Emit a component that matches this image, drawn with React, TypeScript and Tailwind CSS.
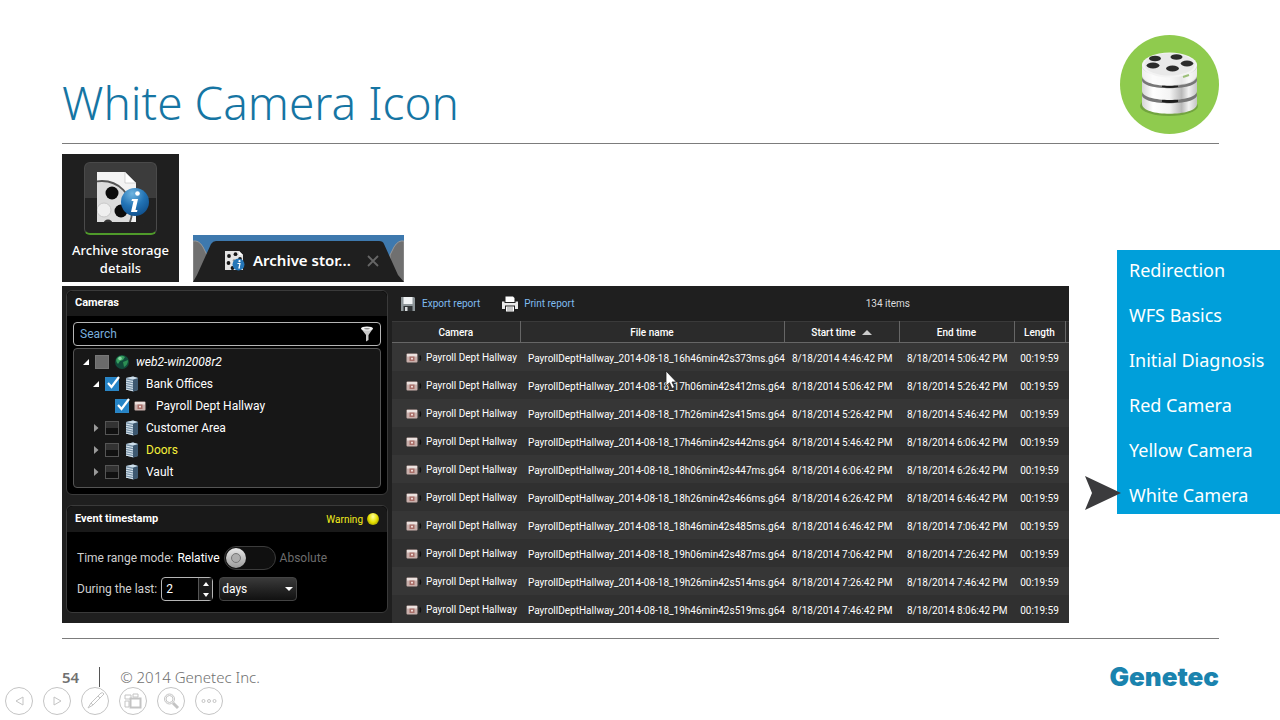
import React, { useState } from 'react';

const files = [
  { file: '16h46min42s373ms', start: '4:46:42', end: '5:06:42' },
  { file: '17h06min42s412ms', start: '5:06:42', end: '5:26:42' },
  { file: '17h26min42s415ms', start: '5:26:42', end: '5:46:42' },
  { file: '17h46min42s442ms', start: '5:46:42', end: '6:06:42' },
  { file: '18h06min42s447ms', start: '6:06:42', end: '6:26:42' },
  { file: '18h26min42s466ms', start: '6:26:42', end: '6:46:42' },
  { file: '18h46min42s485ms', start: '6:46:42', end: '7:06:42' },
  { file: '19h06min42s487ms', start: '7:06:42', end: '7:26:42' },
  { file: '19h26min42s514ms', start: '7:26:42', end: '7:46:42' },
  { file: '19h46min42s519ms', start: '7:46:42', end: '8:06:42' }
];

const topics = [
  'Redirection',
  'WFS Basics',
  'Initial Diagnosis',
  'Red Camera',
  'Yellow Camera',
  'White Camera'
];

const ArchiverLogo = () => (
  <svg viewBox="0 0 99 99" className="size-[99px] shrink-0" aria-hidden="true">
    <defs>
      <linearGradient id="drum" x1="0" x2="1">
        <stop offset="0" stopColor="#d5d5d5" />
        <stop offset="0.2" stopColor="#ffffff" />
        <stop offset="0.5" stopColor="#f4f4f4" />
        <stop offset="0.72" stopColor="#b9b9b9" />
        <stop offset="0.85" stopColor="#f2f2f2" />
        <stop offset="1" stopColor="#c4c4c4" />
      </linearGradient>
    </defs>
    <circle cx="49.500" cy="49.500" r="49.500" fill="#8fcb4e" />
    <ellipse cx="49" cy="71" rx="29" ry="10" fill="#5f8a35" opacity="0.6" />
    <path d="M22 60 V69 C22 82 77 82 77 69 V60 Z" fill="url(#drum)" />
    <path d="M22 60 C22 71 77 71 77 60 L76 56 H23 Z" fill="#777" />
    <path d="M42 67 q8 2 16 0 v-3 h-16 z" fill="#1d1d1d" />
    <path d="M22 45 V56 C22 68 77 68 77 56 V45 Z" fill="url(#drum)" />
    <path d="M22 45 C22 56 77 56 77 45 L76 41 H23 Z" fill="#777" />
    <path d="M42 52 q8 2 16 0 v-3 h-16 z" fill="#1d1d1d" />
    <path d="M22 29 V41 C22 54 77 54 77 41 V29 Z" fill="url(#drum)" />
    <path d="M22 31 C22 45 77 45 77 31 V39 C77 54 22 54 22 39 Z" fill="#fafafa" opacity="0.7" />
    <ellipse cx="49.500" cy="30" rx="27.500" ry="12.500" fill="#f3f3f3" />
    <ellipse cx="49.500" cy="29.500" rx="25" ry="11" fill="#e9e9e9" />
    <g fill="#2b2b2b">
      <ellipse cx="35" cy="23.500" rx="6" ry="2.800" />
      <ellipse cx="56.500" cy="22" rx="6" ry="2.800" />
      <ellipse cx="33" cy="30.500" rx="6.500" ry="2.900" />
      <ellipse cx="67" cy="28.500" rx="6.300" ry="2.900" />
      <ellipse cx="52.500" cy="33.500" rx="6.500" ry="2.900" />
    </g>
    <path d="M63 42 L69 40" stroke="#9bbf78" strokeWidth="2" />
  </svg>
);

const StorageIcon = () => (
  <svg viewBox="0 0 52 52" className="ml-1 size-[52px]" aria-hidden="true">
    <defs>
      <radialGradient id="info" cx="0.4" cy="0.2" r="0.9">
        <stop offset="0" stopColor="#6fb4e0" />
        <stop offset="0.5" stopColor="#2273b5" />
        <stop offset="1" stopColor="#0d4a86" />
      </radialGradient>
      <clipPath id="sheet">
        <path d="M0 0 H28 L39 11 V50 H0 Z" />
      </clipPath>
    </defs>
    <g clipPath="url(#sheet)">
      <rect width="39" height="50" fill="#f3f3f3" />
      <circle cx="5" cy="39" r="30" fill="#dcdcdc" stroke="#555" strokeWidth="1.800" />
      <circle cx="7" cy="38" r="7" fill="#efefef" stroke="#c8c8c8" />
      <circle cx="15" cy="21" r="6.500" fill="#0c0c0c" />
      <circle cx="24" cy="39" r="6.500" fill="#0c0c0c" />
      <circle cx="11" cy="52" r="4.500" fill="#333" />
    </g>
    <path d="M28 0 V11 H39 Z" fill="#ffffff" stroke="#b9b9b9" strokeWidth="0.600" />
    <circle cx="38" cy="30" r="14" fill="url(#info)" />
    <circle cx="40.500" cy="21.500" r="2.300" fill="#fff" />
    <path d="M35 27 h6 l-2.500 11 h2 l-0.500 2 h-6 l2.500 -11 h-2 z" fill="#fff" />
  </svg>
);

const TabIcon = () => (
  <svg viewBox="0 0 20 20" className="relative ml-8 size-5" aria-hidden="true">
    <path d="M0 0 H14 L18 4 V19 H0 Z" fill="#e4e4e4" />
    <path d="M14 0 V4 H18 Z" fill="#fff" />
    <g fill="#161616">
      <circle cx="4" cy="5" r="1.900" />
      <circle cx="10.500" cy="3.200" r="1.900" />
      <circle cx="15" cy="8" r="1.900" />
      <circle cx="3.500" cy="12" r="1.900" />
      <circle cx="7.500" cy="17" r="1.900" />
    </g>
    <circle cx="9" cy="9.500" r="1.300" fill="#999" />
    <circle cx="13.500" cy="13.500" r="6" fill="#2476b8" />
    <circle cx="14.500" cy="10.200" r="1.100" fill="#fff" />
    <path d="M12.500 12.500 h2.500 l-1 4.500 h1" stroke="#fff" strokeWidth="1.200" fill="none" />
  </svg>
);

const CameraIcon = () => (
  <svg viewBox="0 0 16 12" className="h-3 w-4 shrink-0" aria-hidden="true">
    <rect x="0.500" y="1.500" width="11" height="9" rx="1" fill="#c9b0ac" />
    <rect x="1" y="2" width="10" height="2.500" fill="#ece2df" />
    <rect x="3.500" y="4.500" width="5" height="4.500" fill="#a86e68" />
    <rect x="5" y="5.800" width="2" height="1.700" fill="#f0dcd9" />
    <path d="M14 3.500 q1 2 0 5" stroke="#101010" strokeWidth="1.500" fill="none" />
  </svg>
);

const ServerIcon = () => (
  <svg viewBox="0 0 14 16" className="h-4 w-3.5 shrink-0" aria-hidden="true">
    <path d="M1 2 L8 0.500 L13 2 V14 L8 15.500 L1 13.500 Z" fill="#7993a8" />
    <path d="M8 3.500 L13 2 V14 L8 15.500 Z" fill="#3d5870" />
    <path d="M1 2 L8 0.500 L13 2 L8 3.500 Z" fill="#cfe0ec" />
    <path
      d="M1 4 L8 5.500 M1 6.300 L8 7.800 M1 8.600 L8 10.100 M1 10.900 L8 12.400 M1 13.200 L8 14.700"
      stroke="#dce8f1"
      strokeWidth="1"
    />
  </svg>
);

const GlobeIcon = () => (
  <svg viewBox="0 0 16 16" className="size-4 shrink-0" aria-hidden="true">
    <circle cx="8" cy="8" r="7" fill="#114a3a" />
    <path d="M3 4 Q7 0 11 3 L9 6 L6 7 L4 10 Q1 7 3 4 Z" fill="#36a05f" />
    <path d="M9 8 L14 6 Q14 11 10 13 Z" fill="#2c8f53" />
    <circle cx="6" cy="4.500" r="1.800" fill="#9fe0b4" opacity="0.8" />
  </svg>
);

const Expander = ({ open }: { open: boolean }) => (
  <svg viewBox="0 0 8 8" className="size-2 shrink-0" aria-hidden="true">
    {open ? <path d="M7 1 V7 H1 Z" fill="#fff" /> : <path d="M2 0 L6.500 4 L2 8 Z" fill="#9a9a9a" />}
  </svg>
);

interface NodeProps {
  id: string;
  label: string;
  indent: string;
  kind: 'globe' | 'server' | 'camera';
  open?: boolean;
  checked?: boolean;
  partial?: boolean;
  tone?: string;
}

const TreeNode = ({ id, label, indent, kind, open, checked, partial, tone = 'text-white' }: NodeProps) => {
  const [on, setOn] = useState(!!checked);
  return (
    <li className={`flex h-[22px] items-center ${indent}`}>
      {open === undefined ? <span className="w-2" /> : <Expander open={open} />}
      <span className="relative ml-[5px] flex size-[14px] shrink-0">
        <input
          id={id}
          type="checkbox"
          checked={on}
          onChange={() => setOn(!on)}
          className={`size-[14px] appearance-none border ${
            on
              ? 'border-[#2b86c5] bg-[#2583c6]'
              : partial
                ? 'border-[#777] bg-[#6b6b6b]'
                : 'border-[#555] bg-linear-to-b from-[#333] from-50% to-[#111] to-50%'
          }`}
        />
        {on && (
          <svg viewBox="0 0 16 16" className="pointer-events-none absolute -top-0.5 left-0 size-4">
            <path d="M3 8 L6.500 12 L14 2" fill="none" stroke="#fff" strokeWidth="2.200" />
          </svg>
        )}
      </span>
      <span className="ml-[5px] flex w-4 justify-center">
        {kind === 'globe' && <GlobeIcon />}
        {kind === 'server' && <ServerIcon />}
        {kind === 'camera' && <CameraIcon />}
      </span>
      <label htmlFor={id} className={`ml-1.5 ${tone}`}>
        {label}
      </label>
    </li>
  );
};

const CamerasPanel = () => (
  <section className="rounded-md border border-[#3a3a3a] bg-black pb-1.5">
    <h2 className="flex h-[25px] items-center rounded-t-md bg-[#191919] px-2 text-[11px] font-bold">
      Cameras
    </h2>
    <div className="px-1.5 pt-1.5">
      <div className="flex h-6 items-center rounded-sm border border-[#b5b5b5] px-1.5">
        <input
          aria-label="Search"
          placeholder="Search"
          className="min-w-0 flex-1 bg-transparent text-xs outline-none placeholder:text-[#78aedd]"
        />
        <svg viewBox="0 0 14 16" className="h-4 w-3.5" aria-hidden="true">
          <path d="M1 2.500 L6 9 V15.500 L8.500 14 V9 L13 2.500 Z" fill="#c9c9c9" />
          <ellipse cx="7" cy="2.500" rx="6" ry="2" fill="#f3f3f3" />
          <ellipse cx="7" cy="2.700" rx="3" ry="0.800" fill="#8a8a8a" />
        </svg>
      </div>
      <ul className="mt-0.5 rounded-sm border border-[#555] bg-[#171717] pt-0.5 pb-1 text-xs">
        <TreeNode id="root-node" label="web2-win2008r2" indent="pl-2" kind="globe" open partial tone="italic text-white" />
        <TreeNode id="bank" label="Bank Offices" indent="pl-[18px]" kind="server" open checked />
        <TreeNode id="payroll" label="Payroll Dept Hallway" indent="pl-7" kind="camera" checked />
        <TreeNode id="customer" label="Customer Area" indent="pl-[18px]" kind="server" open={false} />
        <TreeNode id="doors" label="Doors" indent="pl-[18px]" kind="server" open={false} tone="text-[#f5f03a]" />
        <TreeNode id="vault" label="Vault" indent="pl-[18px]" kind="server" open={false} />
      </ul>
    </div>
  </section>
);

const TimestampPanel = () => {
  const [days, setDays] = useState(2);
  return (
    <section className="rounded-md border border-[#3a3a3a] bg-black pb-[11px]">
      <div className="flex h-[26px] items-center rounded-t-md bg-[#191919] px-2">
        <h2 className="text-[11px] font-bold">Event timestamp</h2>
        <span className="ml-auto text-[10px] text-[#f3ee1c]">Warning</span>
        <span className="ml-1 size-3 rounded-full bg-radial-[at_50%_30%] from-[#ffffa0] via-[#e6e000] to-[#6b6800]" />
      </div>
      <div className="mt-3.5 flex h-6 items-center pl-2.5 text-xs">
        <label htmlFor="mode" className="text-[#cfcfcf]">
          Time range mode:
        </label>
        <span className="ml-1">Relative</span>
        <span className="relative ml-1 flex">
          <input
            id="mode"
            type="checkbox"
            role="switch"
            className="h-6 w-[52px] appearance-none rounded-full border border-[#3c3c3c] bg-[#101010]"
          />
          <span className="pointer-events-none absolute top-0.5 left-0.5 flex size-5 items-center justify-center rounded-full bg-linear-to-b from-[#e8e8e8] to-[#9c9c9c]">
            <span className="size-2.5 rounded-full border border-[#777] bg-[#adadad]" />
          </span>
        </span>
        <span className="ml-1 text-[#6d6d6d]">Absolute</span>
      </div>
      <div className="mt-[7px] flex h-6 items-center pl-2.5 text-xs">
        <label htmlFor="last" className="text-[#cfcfcf]">
          During the last:
        </label>
        <div className="ml-1 flex h-6 w-[52px] rounded-sm border border-[#b5b5b5]">
          <input
            id="last"
            value={days}
            onChange={(e) => setDays(Number(e.target.value) || 0)}
            className="w-0 min-w-0 flex-1 bg-transparent px-1 outline-none"
          />
          <span className="flex w-3.5 flex-col border-l border-[#555] bg-[#1c1c1c]">
            <button aria-label="More" onClick={() => setDays(days + 1)} className="flex flex-1 items-center justify-center">
              <svg viewBox="0 0 6 4" className="h-1 w-1.5">
                <path d="M0 4 L3 0 L6 4 Z" fill="#fff" />
              </svg>
            </button>
            <button aria-label="Fewer" onClick={() => setDays(days - 1)} className="flex flex-1 items-center justify-center">
              <svg viewBox="0 0 6 4" className="h-1 w-1.5">
                <path d="M0 0 L3 4 L6 0 Z" fill="#fff" />
              </svg>
            </button>
          </span>
        </div>
        <div className="relative ml-1.5">
          <select
            aria-label="Unit"
            className="h-6 w-[78px] appearance-none rounded-sm border border-[#444] bg-linear-to-b from-[#3a3a3a] to-[#111] pl-0.5">
            <option>days</option>
            <option>hours</option>
          </select>
          <svg viewBox="0 0 8 4" className="pointer-events-none absolute top-2.5 right-1 h-1 w-2">
            <path d="M0 0 L4 4 L8 0 Z" fill="#fff" />
          </svg>
        </div>
      </div>
    </section>
  );
};

const Report = () => (
  <div className="relative flex min-w-0 flex-1 flex-col">
    <div className="flex h-[35px] items-center pl-2 text-[10px] text-[#7fbcf0]">
      <button className="flex items-center gap-1.5">
        <svg viewBox="0 0 16 16" className="size-4" aria-hidden="true">
          <path d="M1 1 H14 L15 2 V15 H1 Z" fill="#8d9598" />
          <rect x="3.500" y="1" width="9" height="7" fill="#f1f4f5" />
          <rect x="3.500" y="10" width="9" height="5" fill="#303436" />
          <rect x="5" y="11" width="2.500" height="4" fill="#d9dcdd" />
        </svg>
        Export report
      </button>
      <button className="ml-[22px] flex items-center gap-1.5">
        <svg viewBox="0 0 16 16" className="size-4" aria-hidden="true">
          <path d="M3.500 0.500 H11 L12.500 2 V6 H3.500 Z" fill="#fff" />
          <path d="M0 5.500 H2.500 V7 H13.500 V5.500 H16 V13 H13 V9.500 H3 V13 H0 Z" fill="#e9e9e9" />
          <rect x="4" y="10.500" width="8" height="5" fill="#fff" />
          <path d="M5 12 H11 M5 14 H11" stroke="#777" strokeWidth="0.800" />
        </svg>
        Print report
      </button>
      <span className="ml-auto pr-[159px] text-[#dcdcdc]">134 items</span>
    </div>
    <table className="w-full table-fixed border-collapse text-[10px] whitespace-nowrap">
      <colgroup>
        <col className="w-[128px]" />
        <col />
        <col className="w-[115px]" />
        <col className="w-[115px]" />
        <col className="w-[51px]" />
        <col className="w-1" />
      </colgroup>
      <thead>
        <tr className="h-[21px] border-t border-b border-t-[#3a3a3a] border-b-[#666] bg-[#2b2b2b]">
          <th className="border-r border-[#666] p-0 font-medium">Camera</th>
          <th className="border-r border-[#666] p-0 font-medium">File name</th>
          <th className="border-r border-[#666] p-0 font-medium">
            Start time
            <svg viewBox="0 0 10 5" className="ml-1.5 inline h-[5px] w-2.5" aria-hidden="true">
              <path d="M0 5 L5 0 L10 5 Z" fill="#ccc" />
            </svg>
          </th>
          <th className="border-r border-[#666] p-0 font-medium">End time</th>
          <th className="border-r border-[#666] p-0 font-medium">Length</th>
          <td className="p-0" />
        </tr>
      </thead>
      <tbody>
        {files.map((row) => (
          <tr key={row.file} className="h-7 odd:bg-[#363636] even:bg-[#303030]">
            <td className="p-0 pt-0.5 pl-3.5">
              <div className="flex items-center gap-1">
                <CameraIcon />
                Payroll Dept Hallway
              </div>
            </td>
            <td className="p-0 pt-1 pl-2">PayrollDeptHallway_2014-08-18_{row.file}.g64</td>
            <td className="p-0 pt-1 pl-2">8/18/2014 {row.start} PM</td>
            <td className="p-0 pt-1 pl-2">8/18/2014 {row.end} PM</td>
            <td className="p-0 pt-1 text-center">00:19:59</td>
            <td className="p-0" />
          </tr>
        ))}
      </tbody>
    </table>
    <svg viewBox="0 0 12 20" className="absolute top-[84px] left-[273px] h-5 w-3" aria-hidden="true">
      <path
        d="M1 1 V16 L4.500 12.800 L7 18.500 L9.500 17.300 L7 12 H11.500 Z"
        fill="#fff"
        stroke="#222"
        strokeWidth="0.800"
      />
    </svg>
  </div>
);

const shapes = [
  { label: 'Previous', body: <path d="M18 10 V18 L11 14 Z" /> },
  { label: 'Next', body: <path d="M11 10 V18 L18 14 Z" /> },
  {
    label: 'Pen',
    body: <path d="M7 21 L10 16 L20 6 Q22 5 23 7 L12 18 Z M10 16 L12 18 M17 9 L19 11" />
  },
  {
    label: 'All slides',
    body: (
      <g>
        <path d="M6 8 H12 V12 H6 Z M14 7 H19 V10 H14 Z M6 14 H10 V20 H6 Z" />
        <rect x="11.500" y="11.500" width="10" height="9" strokeWidth="2" fill="#fff" />
      </g>
    )
  },
  {
    label: 'Zoom',
    body: (
      <g>
        <circle cx="12.500" cy="12" r="5" />
        <circle cx="12.500" cy="12" r="3.500" />
        <path d="M16 16 L21 21" strokeWidth="3" />
      </g>
    )
  },
  {
    label: 'More',
    body: (
      <g>
        <circle cx="8.500" cy="14" r="1.500" />
        <circle cx="14" cy="14" r="1.500" />
        <circle cx="19.500" cy="14" r="1.500" />
      </g>
    )
  }
];

const App = () => {
  return (
    <div className="flex min-h-screen flex-col bg-white font-['Noto_Sans',sans-serif]">
      <header className="mr-[61px] ml-[62px] flex items-end justify-between border-b border-[#7c7c7c] pt-[35px] pb-[9px]">
        <h1 className="pb-1 text-[46px] leading-[56px] font-light text-[#1675a3]">White Camera Icon</h1>
        <ArchiverLogo />
      </header>

      <main className="flex items-start pt-2.5 pl-[62px]">
        <div className="min-w-0 flex-1">
          <div className="flex items-end gap-3.5">
            <button className="flex h-32 w-[117px] flex-col items-center bg-[#1f1f1f] pt-2 text-[13px] leading-[18px] font-medium text-white">
              <span className="mb-1.5 flex size-[73px] items-center justify-center rounded-md border border-b-2 border-[#4a4a4a] border-b-[#4f9a2a] bg-linear-to-b from-[#3c3c3c] from-50% to-[#222] to-50%">
                <StorageIcon />
              </span>
              Archive storage details
            </button>
            <div className="relative flex h-[47px] w-[211px] items-center pt-1 text-white">
              <svg viewBox="0 0 211 47" className="absolute inset-0 size-full" aria-hidden="true">
                <rect width="211" height="47" fill="#3e79ae" />
                <path d="M0 6 Q6 5 10 12 L14 20 V47 H0 Z" fill="#707070" stroke="#999" />
                <path d="M211 6 Q205 5 201 12 L197 20 V47 H211 Z" fill="#707070" stroke="#999" />
                <path d="M0 47 L4 40 L18 9 Q20 6 23 6 H186 Q190 6 191 9 L205 40 L211 47 Z" fill="#1f1f1f" />
              </svg>
              <TabIcon />
              <span className="relative ml-2 text-[15px] font-semibold">Archive stor...</span>
              <button aria-label="Close tab" className="relative mr-[25px] ml-auto">
                <svg viewBox="0 0 12 12" className="size-3">
                  <path d="M1 1 L11 11 M11 1 L1 11" stroke="#666" strokeWidth="1.800" />
                </svg>
              </button>
            </div>
          </div>

          <div className="mt-1 flex bg-[#1f1f1f] font-['Roboto',sans-serif] text-white">
            <div className="flex w-[330px] shrink-0 flex-col gap-2.5 p-1">
              <CamerasPanel />
              <TimestampPanel />
            </div>
            <Report />
          </div>
        </div>

        <nav className="relative mt-24 ml-12 w-[163px] shrink-0 bg-[#009fda]">
          <ul className="flex flex-col gap-1.5 text-lg text-white">
            {topics.map((topic) => (
              <li key={topic} className="flex h-[39px] items-center pl-3">
                <a href="#" className="whitespace-nowrap">
                  {topic}
                </a>
              </li>
            ))}
          </ul>
          <svg viewBox="0 0 36 34" className="absolute bottom-1 -left-8 h-[34px] w-9" aria-hidden="true">
            <path d="M0 0 L36 17 L0 34 L7 17 Z" fill="#3b3b3d" />
          </svg>
        </nav>
      </main>

      <footer className="mt-[15px]">
        <div className="mr-[61px] ml-[62px] flex items-center border-t border-[#7c7c7c] pt-7 text-[15px] leading-5 text-[#707070]">
          <span className="font-semibold">54</span>
          <span className="ml-5 h-5 w-px bg-[#555]" />
          <span className="ml-5 font-light">© 2014 Genetec Inc.</span>
          <span className="ml-auto font-['Inter',sans-serif] text-[26px] font-black text-[#1a83ae]">Genetec</span>
        </div>
        <div className="flex gap-2.5 pl-[5px]">
          {shapes.map((shape) => (
            <button key={shape.label} aria-label={shape.label}>
              <svg viewBox="0 0 28 28" className="size-7" fill="none" stroke="#c4c4c4">
                <circle cx="14" cy="14" r="13.500" />
                {shape.body}
              </svg>
            </button>
          ))}
        </div>
      </footer>
    </div>
  );
};

export default App;
